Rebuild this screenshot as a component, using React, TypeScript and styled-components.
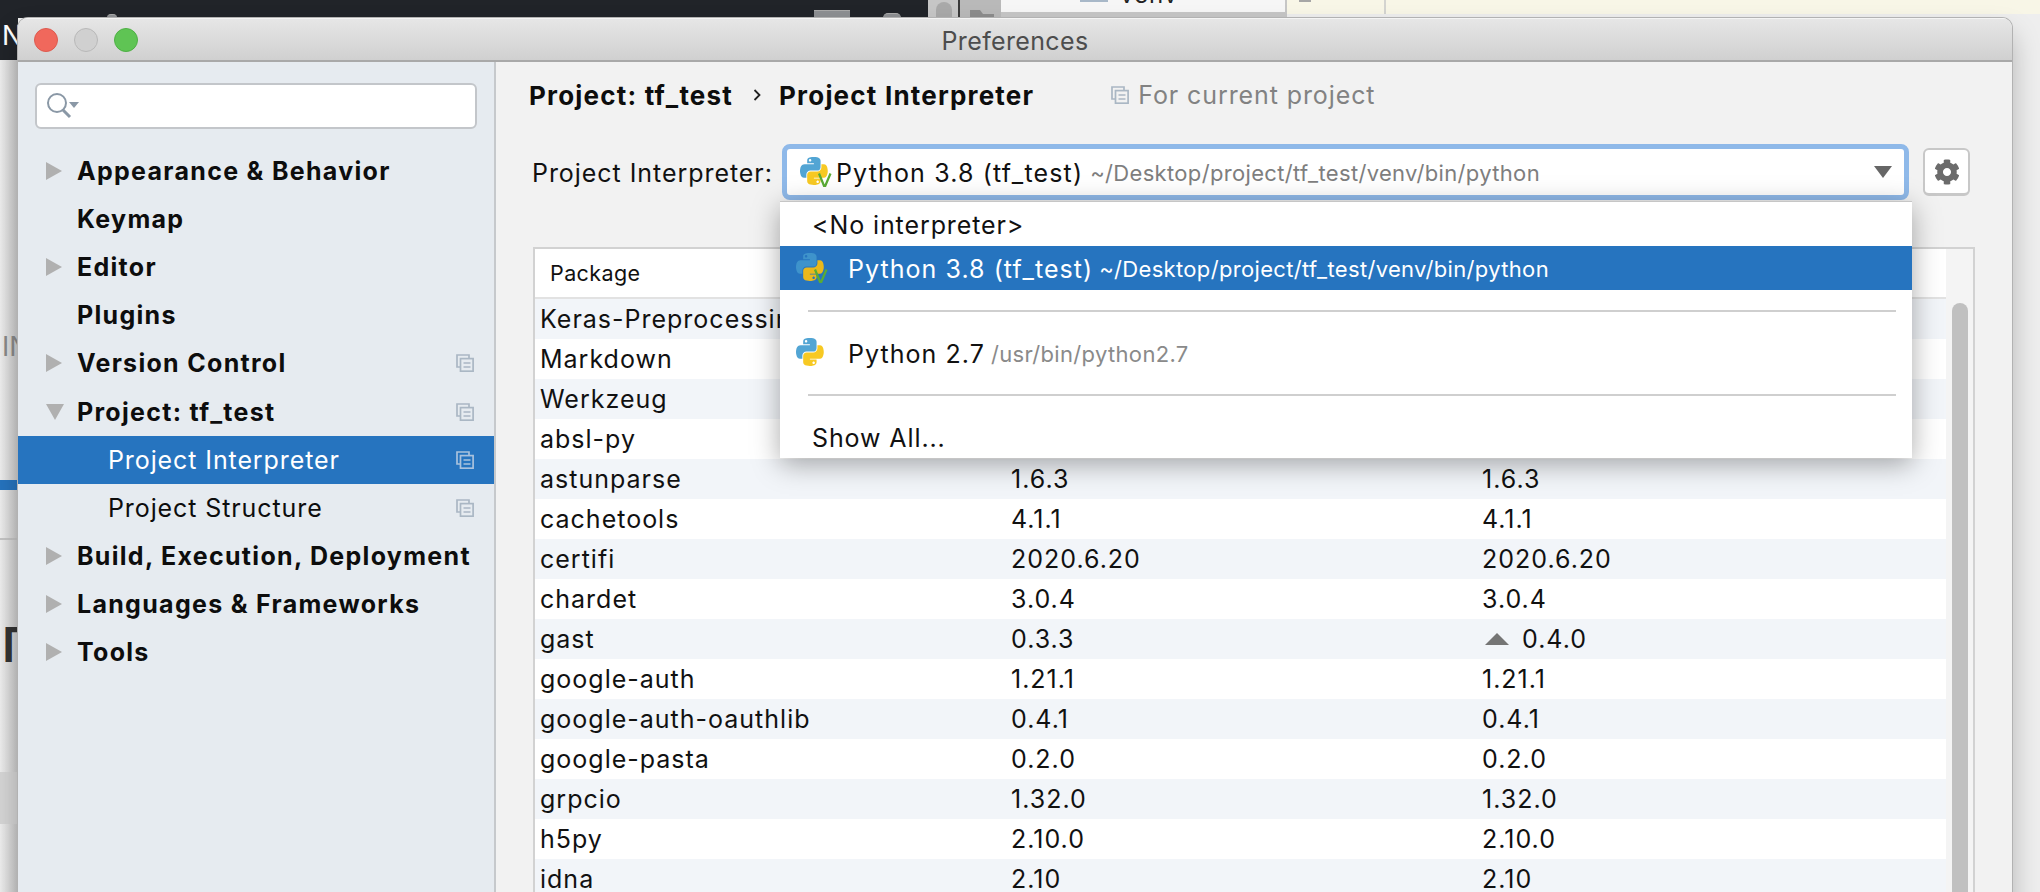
import * as React from "react";
import styled, { createGlobalStyle } from "styled-components";
import { FaCog } from "react-icons/fa";

const uiFont = `Inter, "Noto Sans", "Liberation Sans", sans-serif`;

const GlobalStyle = createGlobalStyle`
  html, body {
    margin: 0;
    padding: 0;
    background: #ececec;
    overflow: hidden;
  }
  * {
    box-sizing: border-box;
  }
`;

const Desktop = styled.div`
  position: relative;
  width: 2040px;
  height: 892px;
  overflow: hidden;
  background: #eeeeee;
  font-family: ${uiFont};
`;

/* what shows around the dialog: other windows behind it */
const TopStrip = styled.div`
  display: flex;
  height: 18px;
`;

const DarkBar = styled.div`
  position: relative;
  flex: 0 0 928px;
  background: #212429;
`;

const Nub = styled.span<{ $left: number; $w: number; $h: number; $round?: boolean }>`
  position: absolute;
  bottom: 0;
  left: ${p => p.$left}px;
  width: ${p => p.$w}px;
  height: ${p => p.$h}px;
  background: #8d8f92;
  border-top: 1px solid #aaaaaa;
  border-radius: ${p => (p.$round ? `${p.$w / 2}px ${p.$w / 2}px 0 0` : "0")};
`;

const ToolSlot = styled.div`
  flex: 0 0 73px;
  display: flex;
  background: #c6c6c6;
`;

const PillTool = styled.div`
  flex: 0 0 32px;
  padding: 2px 6px 0 8px;
  border-right: 2px solid #3a3a3a;
`;

const Pill = styled.div`
  height: 16px;
  background: #a9a9a9;
  border-radius: 8px 8px 0 0;
`;

const FolderTool = styled.div`
  flex: 1;
  padding: 6px 0 0 10px;
  background: #b9b9b9;
`;

const FileTab = styled.div`
  flex: 0 0 286px;
  background: #f6f6f6;
  border-bottom: 6px solid #c6c6c6;
  border-right: 2px solid #c6c6c6;
  overflow: hidden;
  display: flex;
  padding-left: 79px;
  gap: 12px;
`;

const FileIcon = styled.span`
  flex: 0 0 28px;
  height: 2px;
  background: #a8b8c8;
`;

const FileName = styled.span`
  font-size: 24px;
  line-height: 24px;
  letter-spacing: 1px;
  margin-top: -17px;
  color: #222;
`;

const BeigeArea = styled.div`
  flex: 1;
  height: 14px;
  display: flex;
  background: #f8f6e7;
`;

const BeigeCell = styled.div`
  flex: 0 0 99px;
  border-right: 2px solid #d4d4d0;
  padding-left: 12px;
`;

const BeigeMark = styled.div`
  width: 12px;
  height: 2px;
  background: #a6a6a6;
`;

const LeftStrip = styled.div`
  width: 18px;
  height: 874px;
  display: flex;
  flex-direction: column;
  overflow: hidden;
  background: linear-gradient(90deg, #efefef, #c9c9c9);
`;

const DarkCap = styled.div`
  height: 42px;
  background: #212429;
  color: #fff;
  font-size: 27px;
  line-height: 36px;
  padding-left: 2px;
  margin-top: 0;
`;

const StripText = styled.div<{ $h: number; $size: number; $color: string; $bold?: boolean }>`
  height: ${p => p.$h}px;
  font-size: ${p => p.$size}px;
  font-weight: ${p => (p.$bold ? 600 : 400)};
  line-height: ${p => p.$h}px;
  color: ${p => p.$color};
  padding-left: 2px;
  white-space: nowrap;
`;

const StripGap = styled.div<{ $h: number; $bg?: string }>`
  height: ${p => p.$h}px;
  background: ${p => p.$bg || "transparent"};
  flex: none;
`;

const Window = styled.div`
  position: absolute;
  left: 18px;
  top: 18px;
  width: 1994px;
  height: 900px;
  border-radius: 10px 10px 0 0;
  overflow: hidden;
  display: flex;
  flex-direction: column;
  background: #f2f2f2;
`;

const WindowShadow = styled.div`
  position: absolute;
  left: 18px;
  top: 18px;
  width: 1994px;
  height: 900px;
  border-radius: 10px 10px 0 0;
  box-shadow: 0 0 0 1px #b2b2b2, 0 16px 28px rgba(0, 0, 0, 0.26);
`;

const TitleBar = styled.div`
  position: relative;
  flex: 0 0 44px;
  display: flex;
  align-items: center;
  justify-content: center;
  padding-top: 2px;
  background: linear-gradient(#e6e6e6, #d0d0d0);
  border-top: 1px solid #f4f4f4;
  border-bottom: 2px solid #a9a9a9;
  color: #4d4d4d;
  font-size: 25px;
  letter-spacing: 0.35px;
`;

const Lights = styled.div`
  position: absolute;
  left: 16px;
  top: 9px;
  display: flex;
  gap: 16px;
`;

const Light = styled.span<{ $bg: string; $edge: string }>`
  width: 24px;
  height: 24px;
  border-radius: 50%;
  background: ${p => p.$bg};
  border: 1px solid ${p => p.$edge};
`;

const Body = styled.div`
  flex: 1;
  display: flex;
  min-height: 0;
`;

const Sidebar = styled.div`
  flex: 0 0 478px;
  background: #e6ebf0;
  border-right: 2px solid #c6c9cc;
  display: flex;
  flex-direction: column;
`;

const SearchBox = styled.div`
  margin: 21px 17px 18px 17px;
  height: 46px;
  width: 442px;
  background: #fff;
  border: 2px solid #c3c6ca;
  border-radius: 6px;
  display: flex;
  align-items: center;
  padding-left: 9px;
`;

const TreeRow = styled.div<{ $selected?: boolean }>`
  height: 48.1px;
  display: flex;
  align-items: center;
  padding-right: 20px;
  background: ${p => (p.$selected ? "#2674bf" : "transparent")};
  color: ${p => (p.$selected ? "#fff" : "#0d0d0d")};
`;

const ArrowSlot = styled.div<{ $indent: number }>`
  flex: 0 0 ${p => p.$indent}px;
  padding-left: 28px;
  display: flex;
  align-items: center;
`;

const TreeLabel = styled.span<{ $bold?: boolean }>`
  flex: 1;
  font-size: 25px;
  font-weight: ${p => (p.$bold ? 700 : 400)};
  letter-spacing: ${p => (p.$bold ? "1.3px" : "0.9px")};
  white-space: nowrap;
`;

const Main = styled.div`
  flex: 1;
  min-width: 0;
  position: relative;
  display: flex;
  flex-direction: column;
`;

const Breadcrumb = styled.div`
  height: 66px;
  padding: 0 0 0 33px;
  display: flex;
  align-items: center;
  font-size: 26px;
  font-weight: 700;
  color: #0d0d0d;
  letter-spacing: 1.2px;
`;

const Chevron = styled.span`
  margin: 0 18px 0 20px;
  display: flex;
`;

const ScopeHint = styled.span`
  margin-left: 77px;
  display: flex;
  align-items: center;
  gap: 9px;
  font-size: 25px;
  color: #828282;
  font-weight: 400;
  letter-spacing: 0.9px;
`;

const InterpreterRow = styled.div`
  height: 56px;
  margin-top: 16px;
  padding-left: 36px;
  display: flex;
  align-items: center;
  font-size: 25px;
  color: #111;
  letter-spacing: 0.95px;
`;

const InterpreterLabel = styled.span`
  flex: 0 0 250px;
  padding-top: 2px;
`;

const Combo = styled.div`
  flex: 0 0 1127px;
  height: 56px;
  background: #fff;
  border: 5px solid #8fb9e9;
  border-radius: 8px;
  display: flex;
  align-items: center;
  padding: 0 12px 0 13px;
  white-space: nowrap;
`;

const ComboName = styled.span`
  margin-left: 4px;
  padding-top: 2px;
  letter-spacing: 1.15px;
`;

const PathHint = styled.span<{ $color: string; $gap?: number }>`
  margin-left: ${p => p.$gap ?? 7}px;
  padding-top: 2px;
  font-size: 22px;
  letter-spacing: 0.33px;
  color: ${p => p.$color};
`;

const DownCaret = styled.span`
  margin-left: auto;
  display: flex;
`;

const GearButton = styled.div`
  margin-left: 14px;
  width: 47px;
  height: 48px;
  background: #fff;
  border: 2px solid #c8c8c8;
  border-bottom-width: 3px;
  border-radius: 6px;
  display: flex;
  align-items: center;
  justify-content: center;
  color: #6b6b6b;
  font-size: 26px;
`;

const PackageTable = styled.div`
  margin: 47px 0 0 37px;
  width: 1442px;
  flex: 1;
  min-height: 0;
  border: 2px solid #d2d2d2;
  border-bottom: 0;
  display: flex;
`;

const TableBody = styled.div`
  flex: 1;
  display: flex;
  flex-direction: column;
`;

const HeaderRow = styled.div`
  flex: 0 0 50px;
  background: #fff;
  border-bottom: 2px solid #e2e2e2;
  display: flex;
  align-items: center;
  padding-left: 15px;
  font-size: 21.5px;
  letter-spacing: 0.4px;
  color: #111;
`;

const PackageRow = styled.div<{ $striped: boolean }>`
  flex: 0 0 40px;
  display: grid;
  grid-template-columns: 471px 471px 1fr;
  align-items: center;
  padding-left: 5px;
  background: ${p => (p.$striped ? "#f2f5f9" : "#fff")};
  color: #111;
  font-size: 25px;
  letter-spacing: 1px;
  white-space: nowrap;
`;

const UpgradeCell = styled.span`
  display: flex;
  align-items: center;
  gap: 13px;
  padding-left: 3px;
`;

const ScrollTrack = styled.div`
  flex: 0 0 27px;
  background: #f4f4f4;
  padding: 54px 5px 0 6px;
`;

const ScrollThumb = styled.div`
  height: 100%;
  background: #c0c0c0;
  border-radius: 8px 8px 0 0;
`;

const Popup = styled.div`
  position: absolute;
  left: 284px;
  top: 139px;
  width: 1132px;
  height: 257px;
  background: #fff;
  border-top: 1px solid #c6c6c6;
  box-shadow: 0 6px 26px rgba(0, 0, 0, 0.34);
  font-size: 25px;
  letter-spacing: 0.9px;
  color: #111;
  display: flex;
  flex-direction: column;
  white-space: nowrap;
`;

const PopupRow = styled.div<{ $h: number; $top?: number; $selected?: boolean }>`
  flex: 0 0 ${p => p.$h}px;
  display: flex;
  align-items: center;
  padding: ${p => p.$top || 0}px 0 0 16px;
  background: ${p => (p.$selected ? "#2674bf" : "transparent")};
  color: ${p => (p.$selected ? "#fff" : "#111")};
`;

const PopupPlain = styled.span`
  padding: 2px 0 0 16px;
`;

const PopupName = styled.span`
  margin-left: 20px;
  padding-top: 2px;
  letter-spacing: 1.05px;
`;

const PopupRule = styled.div`
  flex: 0 0 2px;
  margin: 0 16px 0 28px;
  background: #cfcfcf;
`;

const TriangleRight = () => (
  <svg width="16" height="18" viewBox="0 0 16 18">
    <polygon points="0,0 16,9 0,18" fill="#b0b0b0" />
  </svg>
);

const TriangleDown = () => (
  <svg width="18" height="16" viewBox="0 0 18 16">
    <polygon points="0,0 18,0 9,16" fill="#b0b0b0" />
  </svg>
);

const CopyIcon = ({ color = "#aab7c4" }: { color?: string }) => (
  <svg width="18" height="18" viewBox="0 0 18 18" fill="none" stroke={color} strokeWidth="1.7">
    <path d="M13 4V1H1v12h3.5" />
    <rect x="4.5" y="4.6" width="12.6" height="12.6" />
    <path d="M7.5 9h7M7.5 13h7" />
  </svg>
);

const SearchIcon = () => (
  <svg width="34" height="26" viewBox="0 0 34 26" fill="none">
    <circle cx="11" cy="10" r="9" stroke="#8a98a6" strokeWidth="2" />
    <path d="M17 17l7 7" stroke="#8a98a6" strokeWidth="3" />
    <polygon points="23,9 33,9 28,15" fill="#8a98a6" />
  </svg>
);

const PythonIcon = ({
  blue,
  yellow,
  venv,
}: {
  blue: string;
  yellow: string;
  venv?: boolean;
}) => (
  <svg width="32" height="30" viewBox="0 0 128 120">
    <path
      fillRule="evenodd"
      fill={blue}
      d="M54.9 0C50.3 0 46 .4 42.1 1.1 30.8 3.1 28.7 7.3 28.7 15v10.2h26.8v3.4H18.7C10.9 28.7 4.1 33.3 1.9 42.2c-2.5 10.2-2.6 16.6 0 27.2C3.8 77.4 8.4 83 16.2 83h9.2V70.8c0-8.8 7.6-16.6 16.7-16.6h26.8c7.4 0 13.4-6.1 13.4-13.6V15c0-7.3-6.1-12.7-13.4-13.9C64.3.3 59.5 0 54.9 0zM40.4 8.2c2.8 0 5 2.3 5 5.1s-2.3 5.1-5 5.1-5-2.3-5-5.1 2.2-5.1 5-5.1z"
    />
    <path
      fillRule="evenodd"
      fill={yellow}
      d="M85.6 28.7v11.9c0 9.2-7.8 17-16.7 17H42.1c-7.3 0-13.4 6.3-13.4 13.6v25.5c0 7.3 6.3 11.5 13.4 13.6 8.5 2.5 16.6 2.9 26.8 0 6.7-2 13.4-5.9 13.4-13.6V86.4H55.5V83h40.2c7.8 0 10.7-5.4 13.4-13.6 2.8-8.4 2.7-15.4 0-27.2-1.9-8.5-5.6-13.6-13.4-13.6H85.6zM70.6 93.9c2.8 0 5 2.3 5 5.1s-2.3 5.1-5 5.1-5-2.3-5-5.1 2.2-5.1 5-5.1z"
    />
    {venv && <path d="M76 66l21 52h3l22-52" fill="none" stroke="#5aab35" strokeWidth="9" />}
  </svg>
);

const packages: [string, string, string, boolean?][] = [
  ["Keras-Preprocessing", "1.1.2", "1.1.2"],
  ["Markdown", "3.3.2", "3.3.2"],
  ["Werkzeug", "1.0.1", "1.0.1"],
  ["absl-py", "0.10.0", "0.10.0"],
  ["astunparse", "1.6.3", "1.6.3"],
  ["cachetools", "4.1.1", "4.1.1"],
  ["certifi", "2020.6.20", "2020.6.20"],
  ["chardet", "3.0.4", "3.0.4"],
  ["gast", "0.3.3", "0.4.0", true],
  ["google-auth", "1.21.1", "1.21.1"],
  ["google-auth-oauthlib", "0.4.1", "0.4.1"],
  ["google-pasta", "0.2.0", "0.2.0"],
  ["grpcio", "1.32.0", "1.32.0"],
  ["h5py", "2.10.0", "2.10.0"],
  ["idna", "2.10", "2.10"],
];

type Node = { label: string; bold?: boolean; arrow?: "right" | "down"; child?: boolean; copy?: boolean; selected?: boolean };

const tree: Node[] = [
  { label: "Appearance & Behavior", bold: true, arrow: "right" },
  { label: "Keymap", bold: true },
  { label: "Editor", bold: true, arrow: "right" },
  { label: "Plugins", bold: true },
  { label: "Version Control", bold: true, arrow: "right", copy: true },
  { label: "Project: tf_test", bold: true, arrow: "down", copy: true },
  { label: "Project Interpreter", child: true, copy: true, selected: true },
  { label: "Project Structure", child: true, copy: true },
  { label: "Build, Execution, Deployment", bold: true, arrow: "right" },
  { label: "Languages & Frameworks", bold: true, arrow: "right" },
  { label: "Tools", bold: true, arrow: "right" },
];

export default function App() {
  return (
    <Desktop>
      <GlobalStyle />
      <TopStrip>
        <DarkBar>
          <Nub $left={107} $w={10} $h={4} $round />
          <Nub $left={814} $w={36} $h={8} />
          <Nub $left={883} $w={18} $h={5} $round />
        </DarkBar>
        <ToolSlot>
          <PillTool>
            <Pill />
          </PillTool>
          <FolderTool>
            <svg width="24" height="12" viewBox="0 0 24 12">
              <path d="M0 0h10l3 4h11v8H0z" fill="#8c8c8c" />
            </svg>
          </FolderTool>
        </ToolSlot>
        <FileTab>
          <FileIcon />
          <FileName>venv</FileName>
        </FileTab>
        <BeigeArea>
          <BeigeCell>
            <BeigeMark />
          </BeigeCell>
        </BeigeArea>
      </TopStrip>
      <LeftStrip>
        <DarkCap>N</DarkCap>
        <StripGap $h={260} />
        <StripText $h={54} $size={27} $color="#8a8a8a">IN</StripText>
        <StripGap $h={106} />
        <StripGap $h={10} $bg="#2674bf" />
        <StripGap $h={48} />
        <StripGap $h={2} $bg="#c4c4c4" />
        <StripGap $h={40} />
        <StripText $h={130} $size={48} $color="#333" $bold>Γ</StripText>
        <StripGap $h={62} />
        <StripGap $h={52} $bg="#d6d6d6" />
      </LeftStrip>

      <WindowShadow />
      <Window>
        <TitleBar>
          <Lights>
            <Light $bg="#f0685c" $edge="#dd5a4f" />
            <Light $bg="#d0d0d0" $edge="#b8b8b8" />
            <Light $bg="#5fc454" $edge="#4eb045" />
          </Lights>
          Preferences
        </TitleBar>
        <Body>
          <Sidebar>
            <SearchBox>
              <SearchIcon />
            </SearchBox>
            {tree.map(n => (
              <TreeRow key={n.label} $selected={n.selected}>
                <ArrowSlot $indent={n.child ? 90 : 59}>
                  {n.arrow === "right" && <TriangleRight />}
                  {n.arrow === "down" && <TriangleDown />}
                </ArrowSlot>
                <TreeLabel $bold={n.bold}>{n.label}</TreeLabel>
                {n.copy && <CopyIcon color={n.selected ? "#a9c2dd" : "#aab7c4"} />}
              </TreeRow>
            ))}
          </Sidebar>
          <Main>
            <Breadcrumb>
              Project: tf_test
              <Chevron>
                <svg width="8" height="12" viewBox="0 0 8 12" fill="none" stroke="#222" strokeWidth="1.8">
                  <path d="M1.5 1l5 5-5 5" />
                </svg>
              </Chevron>
              Project Interpreter
              <ScopeHint>
                <CopyIcon />
                For current project
              </ScopeHint>
            </Breadcrumb>
            <InterpreterRow>
              <InterpreterLabel>Project Interpreter:</InterpreterLabel>
              <Combo>
                <PythonIcon blue="#52a5d4" yellow="#f7c923" venv />
                <ComboName>Python 3.8 (tf_test)</ComboName>
                <PathHint $color="#7e7e7e">~/Desktop/project/tf_test/venv/bin/python</PathHint>
                <DownCaret>
                  <svg width="18" height="12" viewBox="0 0 18 12">
                    <polygon points="0,0 18,0 9,12" fill="#666" />
                  </svg>
                </DownCaret>
              </Combo>
              <GearButton>
                <FaCog />
              </GearButton>
            </InterpreterRow>
            <PackageTable>
              <TableBody>
                <HeaderRow>Package</HeaderRow>
                {packages.map(([name, version, latest, upgrade], i) => (
                  <PackageRow key={name} $striped={i % 2 === 0}>
                    <span>{name}</span>
                    <span>{version}</span>
                    {upgrade ? (
                      <UpgradeCell>
                        <svg width="24" height="12" viewBox="0 0 24 12">
                          <polygon points="12,0 24,12 0,12" fill="#757575" />
                        </svg>
                        {latest}
                      </UpgradeCell>
                    ) : (
                      <span>{latest}</span>
                    )}
                  </PackageRow>
                ))}
              </TableBody>
              <ScrollTrack>
                <ScrollThumb />
              </ScrollTrack>
            </PackageTable>
            <Popup>
              <PopupRow $h={44}>
                <PopupPlain>&lt;No interpreter&gt;</PopupPlain>
              </PopupRow>
              <PopupRow $h={44} $selected>
                <PythonIcon blue="#3e93cb" yellow="#e9b81c" venv />
                <PopupName>Python 3.8 (tf_test)</PopupName>
                <PathHint $color="#fff" $gap={6}>~/Desktop/project/tf_test/venv/bin/python</PathHint>
              </PopupRow>
              <StripGap $h={20} />
              <PopupRule />
              <PopupRow $h={82}>
                <PythonIcon blue="#52a5d4" yellow="#f7c923" />
                <PopupName>Python 2.7</PopupName>
                <PathHint $color="#8a8a8a" $gap={6}>/usr/bin/python2.7</PathHint>
              </PopupRow>
              <PopupRule />
              <PopupRow $h={62} $top={20}>
                <PopupPlain>Show All...</PopupPlain>
              </PopupRow>
            </Popup>
          </Main>
        </Body>
      </Window>
    </Desktop>
  );
}
